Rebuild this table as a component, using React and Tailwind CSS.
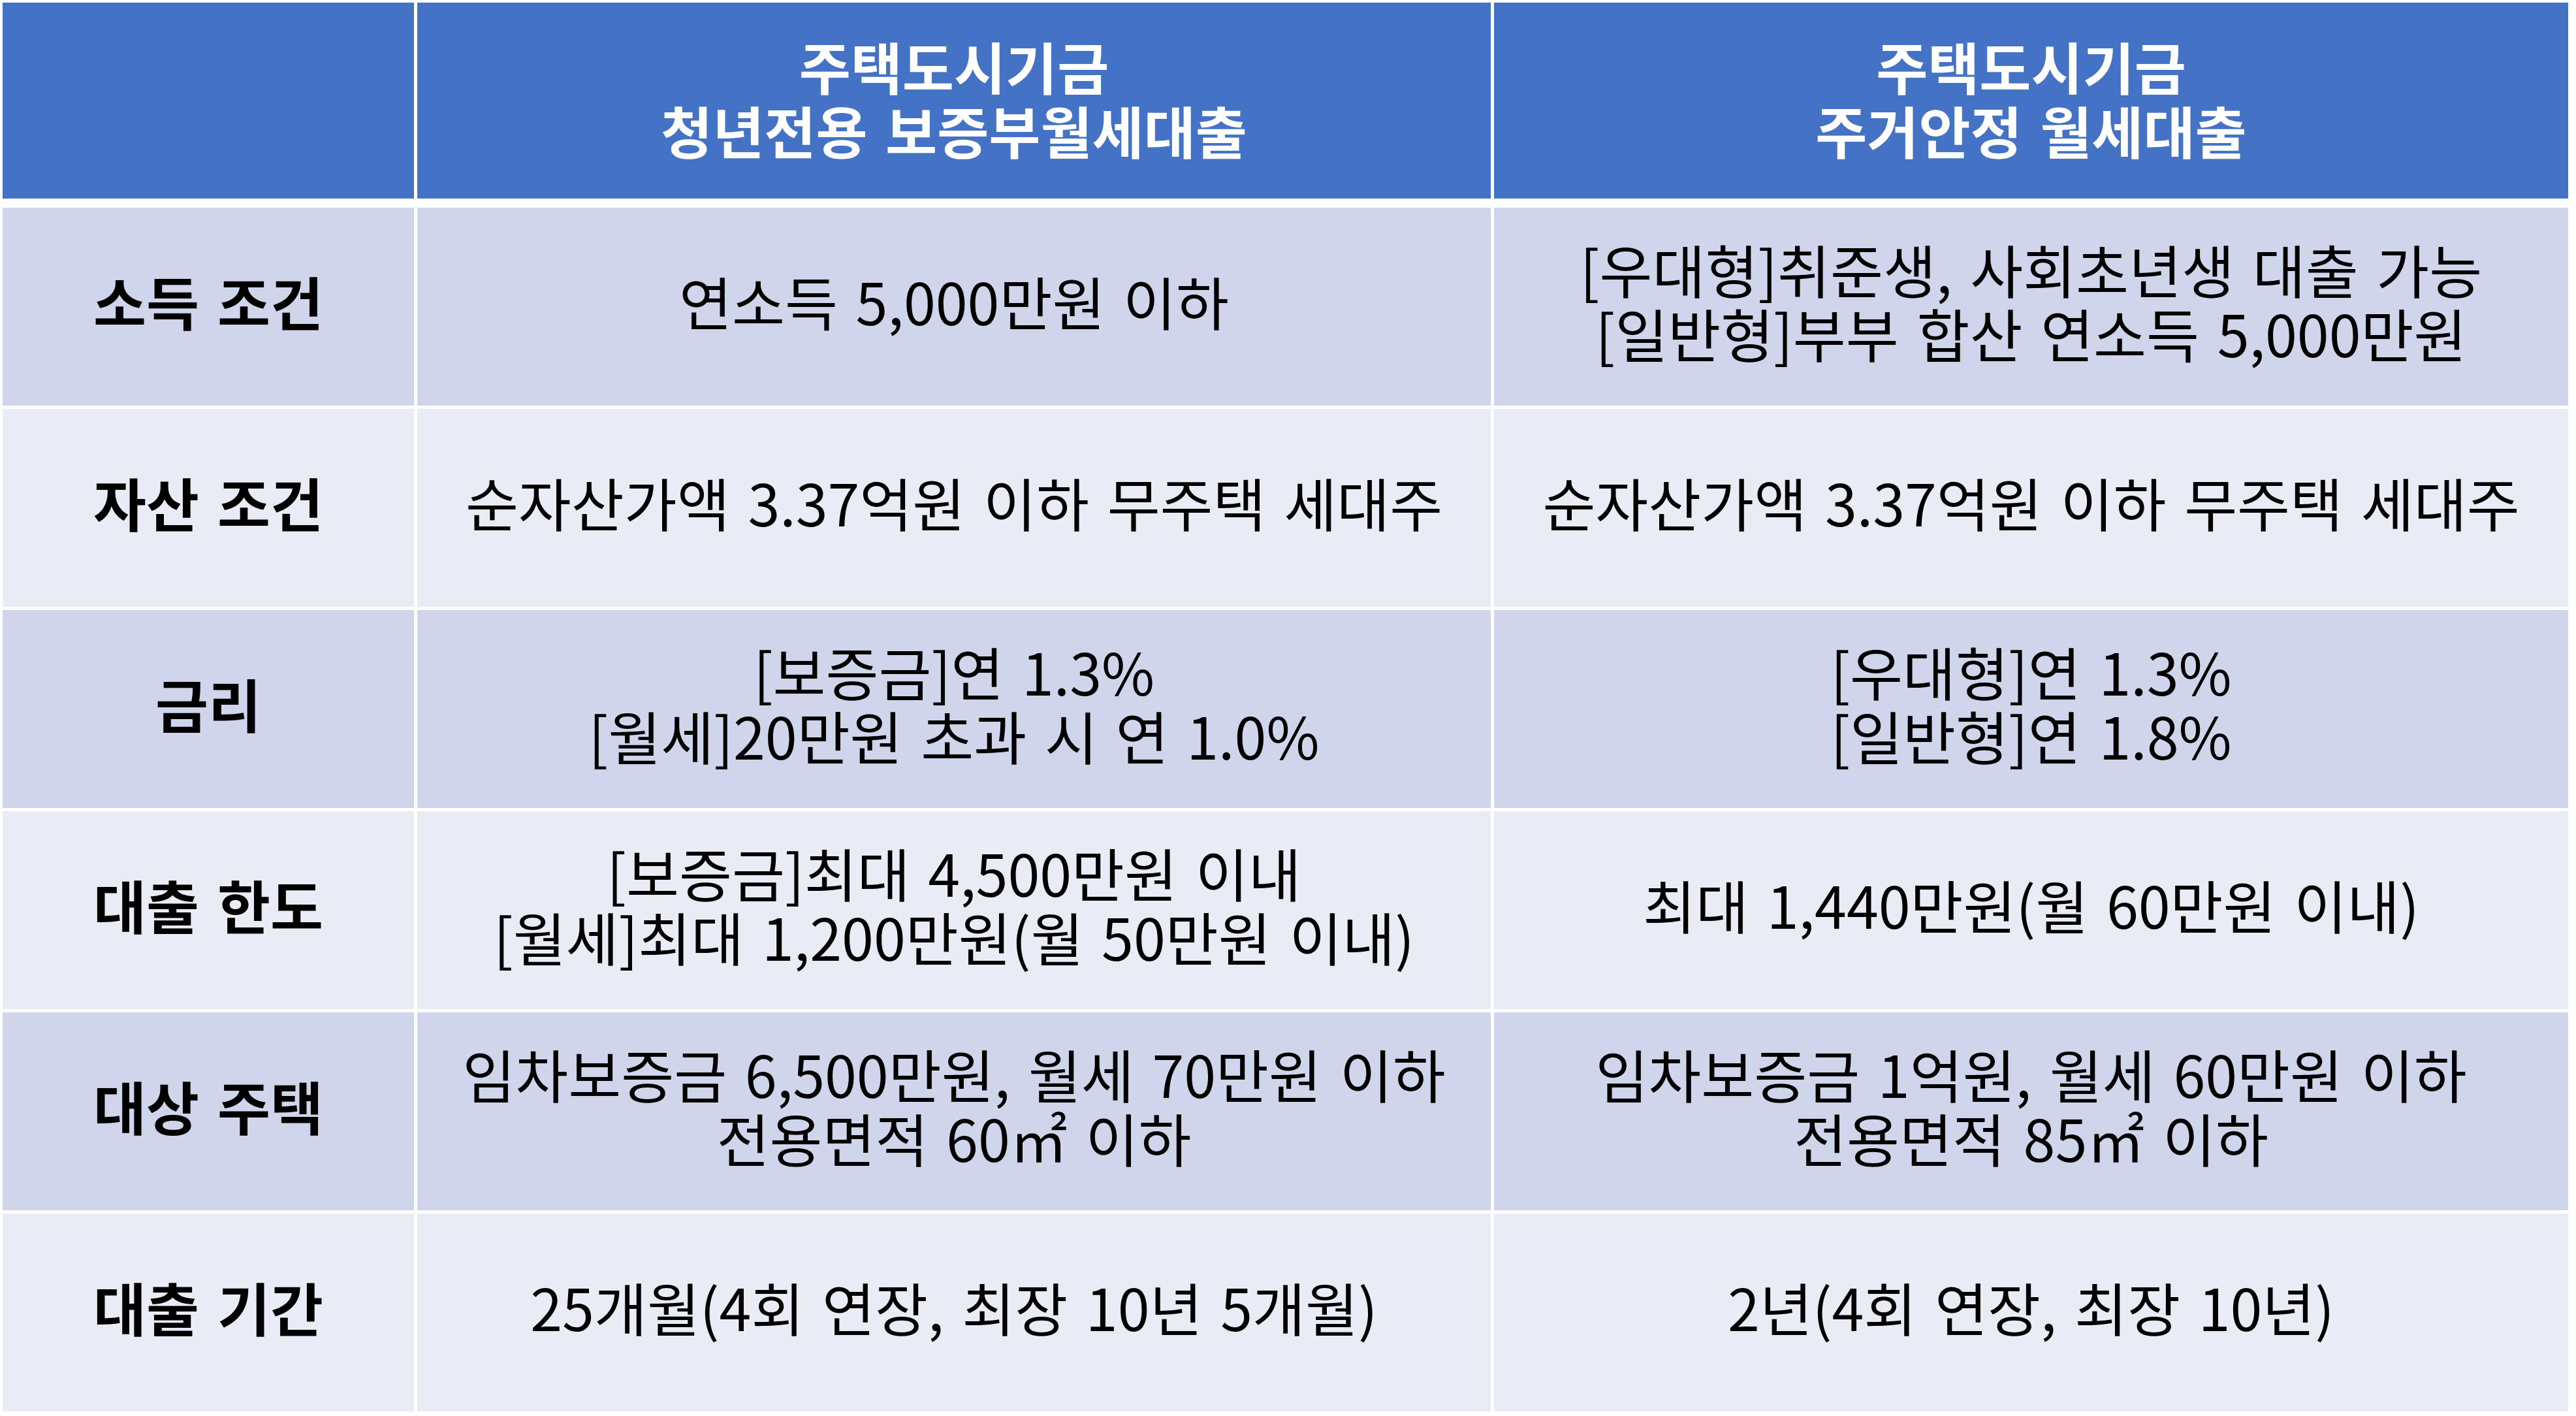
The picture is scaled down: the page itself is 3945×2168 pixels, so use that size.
import React from "react";

const rows = [
  {
    label: "소득 조건",
    a: ["연소득 5,000만원 이하"],
    b: ["[우대형]취준생, 사회초년생 대출 가능", "[일반형]부부 합산 연소득 5,000만원"],
  },
  {
    label: "자산 조건",
    a: ["순자산가액 3.37억원 이하 무주택 세대주"],
    b: ["순자산가액 3.37억원 이하 무주택 세대주"],
  },
  {
    label: "금리",
    a: ["[보증금]연 1.3%", "[월세]20만원 초과 시 연 1.0%"],
    b: ["[우대형]연 1.3%", "[일반형]연 1.8%"],
  },
  {
    label: "대출 한도",
    a: ["[보증금]최대 4,500만원 이내", "[월세]최대 1,200만원(월 50만원 이내)"],
    b: ["최대 1,440만원(월 60만원 이내)"],
  },
  {
    label: "대상 주택",
    a: ["임차보증금 6,500만원, 월세 70만원 이하", "전용면적 60㎡ 이하"],
    b: ["임차보증금 1억원, 월세 60만원 이하", "전용면적 85㎡ 이하"],
  },
  {
    label: "대출 기간",
    a: ["25개월(4회 연장, 최장 10년 5개월)"],
    b: ["2년(4회 연장, 최장 10년)"],
  },
];

// Cell text, one line per entry
const Lines = ({ lines }) => (
  <div className="flex flex-col items-center">
    {lines.map((line, i) => (
      <span key={i} className="whitespace-nowrap">
        {line}
      </span>
    ))}
  </div>
);

const App = () => {
  return (
    <div
      className="w-[3945px] h-[2168px] bg-white p-[4px] text-black"
      style={{ fontFamily: '"Noto Sans CJK KR", "Noto Sans", sans-serif' }}
    >
      <div className="grid grid-cols-[630px_1644px_1645px] gap-x-[5px] h-[300px] bg-white text-white font-bold text-[86px] leading-[98px] [word-spacing:8px]">
        <div className="bg-[#4472c4]"></div>
        <div className="bg-[#4472c4] flex items-center justify-center pb-[8px]">
          <Lines lines={["주택도시기금", "청년전용 보증부월세대출"]} />
        </div>
        <div className="bg-[#4472c4] flex items-center justify-center pb-[8px]">
          <Lines lines={["주택도시기금", "주거안정 월세대출"]} />
        </div>
      </div>

      <div className="grid grid-cols-[630px_1644px_1645px] grid-rows-[repeat(6,303px)] gap-[5px] mt-[14px] text-[88px] leading-[98px] [word-spacing:8px]">
        {rows.map((row, i) => {
          const bg = i % 2 === 0 ? "bg-[#cfd5ea]" : "bg-[#e9ebf5]";
          return (
            <React.Fragment key={row.label}>
              <div className={`${bg} flex items-center justify-center pb-[20px] font-bold`}>
                {row.label}
              </div>
              <div className={`${bg} flex items-center justify-center pb-[20px]`}>
                <Lines lines={row.a} />
              </div>
              <div className={`${bg} flex items-center justify-center pb-[20px]`}>
                <Lines lines={row.b} />
              </div>
            </React.Fragment>
          );
        })}
      </div>
    </div>
  );
};

export default App;
